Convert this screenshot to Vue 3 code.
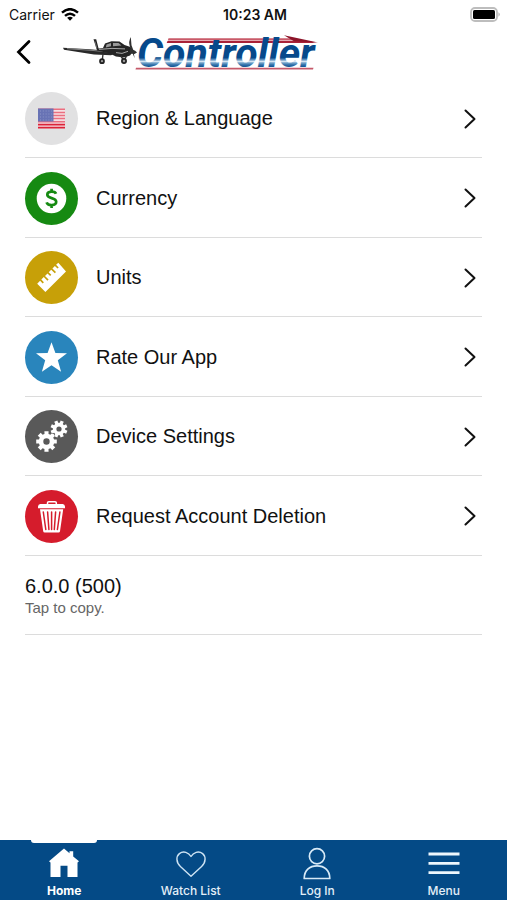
<script setup>
import { ref } from 'vue'

const rows = [
  { id: 'region', label: 'Region & Language' },
  { id: 'currency', label: 'Currency' },
  { id: 'units', label: 'Units' },
  { id: 'rate', label: 'Rate Our App' },
  { id: 'device', label: 'Device Settings' },
  { id: 'delete', label: 'Request Account Deletion' }
]

const tabs = ['Home', 'Watch List', 'Log In', 'Menu']
const active = ref('Home')
const version = '6.0.0 (500)'

// Outline of a toothed wheel centred on (cx, cy), with a round hole.
function gear(cx, cy, outer, inner, hole, turn) {
  const teeth = 8
  const points = []
  for (let i = 0; i < teeth; i++) {
    const mid = ((i + turn) * 2 * Math.PI) / teeth
    for (const [radius, offset] of [[inner, -0.26], [outer, -0.2], [outer, 0.2], [inner, 0.26]]) {
      const a = mid + offset
      points.push(`${(cx + radius * Math.cos(a)).toFixed(2)} ${(cy + radius * Math.sin(a)).toFixed(2)}`)
    }
  }
  return `M${points.join('L')}ZM${cx - hole} ${cy}a${hole} ${hole} 0 1 0 ${hole * 2} 0a${hole} ${hole} 0 1 0 ${-hole * 2} 0Z`
}
const gears = gear(21.5, 31.5, 10.5, 7.8, 3.2, 0) + gear(34, 19, 8.6, 6.2, 2.6, 0.5)

function copyVersion() {
  navigator.clipboard?.writeText(version)
}
</script>

<template>
  <div class="screen">
    <div class="status">
      <div class="carrier">
        <span>Carrier</span>
        <svg width="18" height="13" viewBox="0 0 18 13" aria-hidden="true">
          <g fill="none" stroke="#000" stroke-width="2.5">
            <path d="M1 4.6Q9-2.2 17 4.6" />
            <path d="M4 7.9Q9 3.6 14 7.9" />
          </g>
          <path d="M6.1 9.8Q9 7.6 11.9 9.8L9 12.8Z" />
        </svg>
      </div>
      <time>10:23 AM</time>
      <svg class="battery" width="31" height="15" viewBox="0 0 31 15" aria-hidden="true">
        <rect x="1" y="1" width="26" height="13" rx="4" fill="#fff" stroke="#bdbdbd" stroke-width="1.8" />
        <rect x="3" y="3" width="22" height="9" rx="1.5" />
        <path d="M28.5 5.3Q31 7.5 28.5 9.7Z" fill="#aaa" />
      </svg>
    </div>

    <header class="header">
      <button class="back" type="button" aria-label="Back">
        <svg width="16" height="26" viewBox="0 0 16 26"><path d="M13 2.5 2.5 13 13 23.5" fill="none" stroke="#000" stroke-width="2.8" stroke-linecap="round" /></svg>
      </button>
      <svg class="logo" width="270" height="51" viewBox="0 -4 270 51" role="img" aria-label="Controller">
        <defs>
          <linearGradient id="lettering" gradientUnits="userSpaceOnUse" x1="0" y1="5" x2="0" y2="36">
            <stop offset="0" stop-color="#07498b" />
            <stop offset=".67" stop-color="#07498b" />
            <stop offset=".74" stop-color="#6f9cc5" />
            <stop offset=".79" stop-color="#d5e5f1" />
            <stop offset=".83" stop-color="#7ba8cd" />
            <stop offset=".9" stop-color="#2f6fa8" />
            <stop offset="1" stop-color="#07498b" />
          </linearGradient>
        </defs>
        <g class="plane">
          <path d="M1 15.8 28 17.2 52 19.4 53.5 21.3 49 23.2 32 22.4 2 17.8Z" fill="#292929" />
          <path d="M5 16.7 30 18.4 50 20.3" fill="none" stroke="#aaa" stroke-width=".7" />
          <path d="M31.5 7.2 34.2 7.3 36.6 16.5 41 16 43 11.5 49.5 9.2 57.5 9.4 62.5 13.1 68.5 15 71 19.5 68 23.6 62 25.6 54 24.6 48 21.6 35 18.6Z" fill="#252525" />
          <path d="M44.5 12.5 49 11 49 14.3 43.8 15.4ZM51 10.9 56.5 11 59.5 13.6 51 14.2Z" fill="#999" />
          <path d="M37 17.4 50 16.4 63 16.9M54 20.6 60 21.4 66 19.3" fill="none" stroke="#c8c8c8" stroke-width=".8" />
          <path d="M33 9.5 34.8 16" stroke="#888" stroke-width=".7" />
          <path d="M68.8 5Q66.3 9.6 67.8 14.2L69.6 18.8 72.6 26.2 71.4 18.2 69.5 13.2Z" fill="#303030" />
          <path d="M68 16.6 73.2 18.7 75 20.5 72.5 21.9 68 21.4Z" fill="#303030" />
          <path d="M41 22 40.3 28M58.8 24 61.5 28M64.5 24 62.5 28" stroke="#333" stroke-width="1.4" />
          <circle cx="40" cy="29.2" r="2" fill="#999" stroke="#222" stroke-width="1.7" />
          <circle cx="62" cy="29" r="2.1" fill="#999" stroke="#222" stroke-width="1.7" />
        </g>
        <path d="M106.5 6.2H232L237 8.4H105.8Z" fill="#c95a69" />
        <path d="M105.5 9H247L254 11H104.7Z" fill="#a92238" />
        <path d="M222 3.2 256 10.6 232 9.2Z" fill="#8c1429" />
        <text class="wordmark" x="75" y="35" fill="url(#lettering)">Controller</text>
        <path d="M74 35.8H251.5L251 37.4H73.5Z" fill="#c5596a" />
      </svg>
    </header>

    <main class="content">
      <button v-for="row in rows" :key="row.id" class="row" type="button">
        <span class="badge" :class="row.id">
          <svg v-if="row.id === 'region'" width="53" height="53" viewBox="0 0 53 53">
            <rect x="13" y="16.5" width="27" height="20" fill="#f6dfe3" />
            <path d="M13 17.3H40M13 20.4H40M13 23.5H40M13 26.6H40M13 29.7H40" stroke="#ea6f80" stroke-width="1.5" />
            <path d="M13 32.6H40M13 35.6H40" stroke="#db2338" stroke-width="1.8" />
            <rect x="13" y="16.5" width="15.5" height="13" fill="#6873b5" />
            <path d="M15 19H28M15 22H28M15 25H28M15 28H28" stroke="#929bcb" stroke-width=".9" stroke-dasharray="1 1.8" />
          </svg>
          <svg v-else-if="row.id === 'currency'" width="53" height="53" viewBox="0 0 53 53">
            <circle cx="26.5" cy="26.5" r="14.8" fill="#fff" />
            <path d="M31 21.8C30 18.8 22.3 18.8 22.3 22.7 22.3 27.2 31.2 25 31.2 29.8 31.2 34 22.7 34.2 21.6 30.4M26.6 16.8V20M26.6 32.5V36" fill="none" stroke="#168a12" stroke-width="2.7" />
          </svg>
          <svg v-else-if="row.id === 'units'" width="53" height="53" viewBox="0 0 53 53">
            <path d="M12.2 32.7 15.1 29.8 17.7 32.4 18.9 31.2 16.3 28.6 18.8 26.1 22.4 29.7 23.6 28.5 20 24.9 22.5 22.4 25.1 25 26.3 23.8 23.7 21.2 26.2 18.7 29.8 22.3 31 21.1 27.4 17.5 29.9 15 32.5 17.6 33.7 16.4 31.1 13.8 33.3 11.8 41 20.4 20.4 41Z" fill="#fff" />
          </svg>
          <svg v-else-if="row.id === 'rate'" width="53" height="53" viewBox="0 0 53 53">
            <path d="M26.5 11.2 30.4 21.9 42 22.2 32.8 29.3 36.1 40.8 26.5 34.2 16.9 40.8 20.2 29.3 11 22.2 22.6 21.9Z" fill="#fff" />
          </svg>
          <svg v-else-if="row.id === 'device'" width="53" height="53" viewBox="0 0 53 53">
            <path :d="gears" fill="#fff" fill-rule="evenodd" />
          </svg>
          <svg v-else width="53" height="53" viewBox="0 0 53 53">
            <path d="M22.5 14V12.8Q22.5 11.7 23.8 11.7H30Q31.3 11.7 31.3 12.8V14" fill="none" stroke="#fff" stroke-width="1.5" />
            <path d="M15.3 14H37.7Q39.8 14.2 40 16.6V18.2H13V16.6Q13.2 14.2 15.3 14ZM15 19.3H38.2L35 41.2Q34.8 42.5 33.5 42.5H19.7Q18.4 42.5 18.2 41.2Z" fill="#fff" />
            <path d="M18.3 22 20.8 39.5M22.6 22 23.9 39.5M26.6 22V39.5M30.6 22 29.3 39.5M34.9 22 32.4 39.5" stroke="#d51c2c" stroke-width="1.5" stroke-linecap="round" />
          </svg>
        </span>
        <span class="label">{{ row.label }}</span>
        <svg class="chevron" width="14" height="22" viewBox="0 0 14 22" aria-hidden="true"><path d="M2.5 2.5 11.5 11 2.5 19.5" fill="none" stroke="#111" stroke-width="2" stroke-linecap="round" stroke-linejoin="round" /></svg>
      </button>
      <button class="version" type="button" @click="copyVersion">
        <span class="number">{{ version }}</span>
        <span class="hint">Tap to copy.</span>
      </button>
    </main>

    <nav class="tabs">
      <button v-for="tab in tabs" :key="tab" class="tab" :class="{ active: active === tab }" type="button" @click="active = tab">
        <svg width="34" height="34" viewBox="0 0 34 34" aria-hidden="true">
          <path v-if="tab === 'Home'" d="M17 1.5 22.5 6.2V4.2H26.2V9.4L32 14.2 30.5 15.5V30H20.5V18.7H13.5V30H3.5V15.5L2 14.2Z" fill="#fff" />
          <path v-else-if="tab === 'Watch List'" d="M17 29.2 6.4 19.4C1.8 15 2.1 9.3 5.4 6.6 9.5 3.5 14.7 5.5 17 9.5 19.3 5.5 24.5 3.5 28.6 6.6 31.9 9.3 32.2 15 27.6 19.4Z" fill="none" stroke="#cfe4f4" stroke-width="1.4" stroke-linejoin="round" />
          <g v-else-if="tab === 'Log In'" fill="none" stroke="#d8eaf7" stroke-width="1.7" stroke-linejoin="round">
            <circle cx="17" cy="9.2" r="7.6" />
            <path d="M4.2 31.5C4.2 23.3 9.5 18.9 17 18.9S29.8 23.3 29.8 31.5Z" />
          </g>
          <path v-else d="M1.5 7H32.5M1.5 16.3H32.5M1.5 25.6H32.5" stroke="#eef7fd" stroke-width="2.8" />
        </svg>
        <span>{{ tab }}</span>
      </button>
    </nav>
  </div>
</template>

<style>
body {
  margin: 0;
  background: #fff;
}
</style>

<style scoped>
.screen {
  display: flex;
  flex-direction: column;
  min-height: 100vh;
  color: #111;
  font-family: "Liberation Sans", Arial, sans-serif;
}
button {
  margin: 0;
  padding: 0;
  border: 0;
  background: none;
  color: inherit;
  font: inherit;
  cursor: pointer;
}
svg {
  display: block;
  flex: none;
}
.status {
  display: grid;
  grid-template-columns: 1fr auto 1fr;
  align-items: center;
  height: 28px;
  padding: 0 6px 0 9px;
  font-family: Inter, sans-serif;
  font-size: 14px;
}
.carrier {
  display: flex;
  align-items: center;
  gap: 6px;
}
.status time {
  font-weight: 600;
}
.battery {
  justify-self: end;
}
.header {
  display: flex;
  align-items: flex-start;
  gap: 30px;
  padding: 0 16px;
}
.back {
  padding-top: 11px;
}
.wordmark {
  font-family: Roboto, sans-serif;
  font-size: 41px;
  font-style: italic;
  font-weight: 700;
}
.content {
  flex: 1;
  padding: 0 25px;
}
.row {
  display: flex;
  align-items: center;
  width: 100%;
  height: 79px;
  padding-top: 1px;
  border-bottom: 1px solid #dcdcdc;
  text-align: left;
}
.row:nth-child(even) {
  height: 80px;
}
.badge {
  flex: none;
  width: 53px;
  height: 53px;
  border-radius: 50%;
}
.region { background: #e1e1e2; }
.currency { background: #168a12; }
.units { background: #c7a008; }
.rate { background: #2985bc; }
.device { background: #595959; }
.delete { background: #d51c2c; }
.label {
  flex: 1;
  padding-left: 18px;
  font-size: 20px;
}
.chevron {
  margin-right: 5px;
}
.version {
  display: flex;
  flex-direction: column;
  justify-content: center;
  align-items: flex-start;
  width: 100%;
  height: 79px;
  padding-top: 1px;
  border-bottom: 1px solid #dcdcdc;
}
.number {
  font-size: 20px;
  line-height: 24px;
}
.hint {
  color: #666;
  font-size: 15px;
  line-height: 20px;
}
.tabs {
  display: grid;
  grid-template-columns: repeat(4, 1fr);
  height: 60px;
  padding-left: 1px;
  background: #044a86;
}
.tab {
  position: relative;
  display: flex;
  flex-direction: column;
  align-items: center;
  padding-top: 7px;
  gap: 2px;
  color: #e3eff8;
  font-family: Inter, sans-serif;
  font-size: 12px;
  font-weight: 500;
  line-height: 16px;
}
.tab.active {
  color: #fff;
  font-weight: 700;
}
.tab.active::before {
  content: "";
  position: absolute;
  top: 0;
  width: 66px;
  height: 3px;
  border-radius: 0 0 3px 3px;
  background: #fff;
}
</style>
